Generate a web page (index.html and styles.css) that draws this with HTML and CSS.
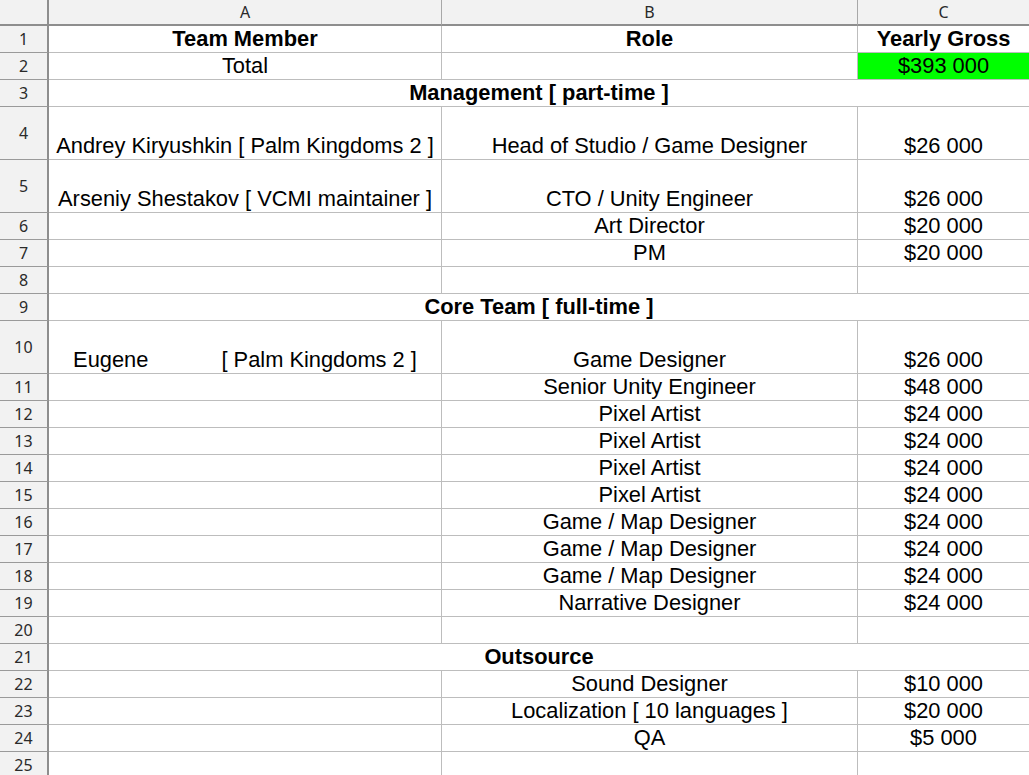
FILE: index.html
```html
<!DOCTYPE html>
<html lang="en">
<head>
<meta charset="utf-8">
<title>Team budget</title>
<link rel="stylesheet" href="styles.css">
</head>
<body>
<div class="sheet">
  <div class="row colhead">
    <div class="corner"></div>
    <div class="colname">A</div>
    <div class="colname">B</div>
    <div class="colname last">C</div>
  </div>

  <div class="row">
    <div class="rownum">1</div>
    <div class="cell bold">Team Member</div>
    <div class="cell bold">Role</div>
    <div class="cell last bold">Yearly Gross</div>
  </div>
  <div class="row">
    <div class="rownum">2</div>
    <div class="cell">Total</div>
    <div class="cell"></div>
    <div class="cell last total">$393 000</div>
  </div>
  <div class="row">
    <div class="rownum">3</div>
    <div class="cell merged bold">Management [ part-time ]</div>
  </div>
  <div class="row tall">
    <div class="rownum">4</div>
    <div class="cell">Andrey Kiryushkin [ Palm Kingdoms 2 ]</div>
    <div class="cell">Head of Studio / Game Designer</div>
    <div class="cell last">$26 000</div>
  </div>
  <div class="row tall">
    <div class="rownum">5</div>
    <div class="cell">Arseniy Shestakov [ VCMI maintainer ]</div>
    <div class="cell">CTO / Unity Engineer</div>
    <div class="cell last">$26 000</div>
  </div>
  <div class="row">
    <div class="rownum">6</div>
    <div class="cell"></div>
    <div class="cell">Art Director</div>
    <div class="cell last">$20 000</div>
  </div>
  <div class="row">
    <div class="rownum">7</div>
    <div class="cell"></div>
    <div class="cell">PM</div>
    <div class="cell last">$20 000</div>
  </div>
  <div class="row">
    <div class="rownum">8</div>
    <div class="cell"></div>
    <div class="cell"></div>
    <div class="cell last"></div>
  </div>
  <div class="row">
    <div class="rownum">9</div>
    <div class="cell merged bold">Core Team [ full-time ]</div>
  </div>
  <div class="row tall">
    <div class="rownum">10</div>
    <div class="cell split"><span>Eugene</span><span>[ Palm Kingdoms 2 ]</span></div>
    <div class="cell">Game Designer</div>
    <div class="cell last">$26 000</div>
  </div>
  <div class="row">
    <div class="rownum">11</div>
    <div class="cell"></div>
    <div class="cell">Senior Unity Engineer</div>
    <div class="cell last">$48 000</div>
  </div>
  <div class="row">
    <div class="rownum">12</div>
    <div class="cell"></div>
    <div class="cell">Pixel Artist</div>
    <div class="cell last">$24 000</div>
  </div>
  <div class="row">
    <div class="rownum">13</div>
    <div class="cell"></div>
    <div class="cell">Pixel Artist</div>
    <div class="cell last">$24 000</div>
  </div>
  <div class="row">
    <div class="rownum">14</div>
    <div class="cell"></div>
    <div class="cell">Pixel Artist</div>
    <div class="cell last">$24 000</div>
  </div>
  <div class="row">
    <div class="rownum">15</div>
    <div class="cell"></div>
    <div class="cell">Pixel Artist</div>
    <div class="cell last">$24 000</div>
  </div>
  <div class="row">
    <div class="rownum">16</div>
    <div class="cell"></div>
    <div class="cell">Game / Map Designer</div>
    <div class="cell last">$24 000</div>
  </div>
  <div class="row">
    <div class="rownum">17</div>
    <div class="cell"></div>
    <div class="cell">Game / Map Designer</div>
    <div class="cell last">$24 000</div>
  </div>
  <div class="row">
    <div class="rownum">18</div>
    <div class="cell"></div>
    <div class="cell">Game / Map Designer</div>
    <div class="cell last">$24 000</div>
  </div>
  <div class="row">
    <div class="rownum">19</div>
    <div class="cell"></div>
    <div class="cell">Narrative Designer</div>
    <div class="cell last">$24 000</div>
  </div>
  <div class="row">
    <div class="rownum">20</div>
    <div class="cell"></div>
    <div class="cell"></div>
    <div class="cell last"></div>
  </div>
  <div class="row">
    <div class="rownum">21</div>
    <div class="cell merged bold">Outsource</div>
  </div>
  <div class="row">
    <div class="rownum">22</div>
    <div class="cell"></div>
    <div class="cell">Sound Designer</div>
    <div class="cell last">$10 000</div>
  </div>
  <div class="row">
    <div class="rownum">23</div>
    <div class="cell"></div>
    <div class="cell">Localization [ 10 languages ]</div>
    <div class="cell last">$20 000</div>
  </div>
  <div class="row">
    <div class="rownum">24</div>
    <div class="cell"></div>
    <div class="cell">QA</div>
    <div class="cell last">$5 000</div>
  </div>
  <div class="row">
    <div class="rownum">25</div>
    <div class="cell"></div>
    <div class="cell"></div>
    <div class="cell last"></div>
  </div>
</div>
</body>
</html>
```

FILE: styles.css
```css
html, body {
  margin: 0;
  padding: 0;
  background: #ffffff;
}

body {
  width: 1029px;
  height: 775px;
  overflow: hidden;
}

.sheet {
  display: flex;
  flex-direction: column;
  width: 1029px;
}

.row {
  display: grid;
  grid-template-columns: 49px 393px 416px 171px;
  height: 27px;
}

.row.tall {
  height: 53px;
}

.row.colhead {
  height: 26px;
}

.corner,
.colname {
  background: #f2f2f2;
  border-bottom: 2px solid #8e8e8e;
  box-sizing: border-box;
}

.corner {
  border-right: 2px solid #8e8e8e;
}

.colname {
  border-right: 1px solid #a8a8a8;
  display: flex;
  align-items: center;
  justify-content: center;
  font-family: "Noto Sans", "Open Sans", sans-serif;
  font-size: 16px;
  color: #2a2a2a;
  line-height: 20px;
}

.colname.last {
  border-right: none;
}

.rownum {
  background: #f2f2f2;
  border-right: 2px solid #8e8e8e;
  border-bottom: 1px solid #9a9a9a;
  box-sizing: border-box;
  display: flex;
  align-items: center;
  justify-content: center;
  font-family: "Noto Sans", "Open Sans", sans-serif;
  font-size: 16px;
  color: #2a2a2a;
  line-height: 20px;
}

.cell {
  border-right: 1px solid #bdbdbd;
  border-bottom: 1px solid #bdbdbd;
  box-sizing: border-box;
  display: flex;
  align-items: flex-end;
  justify-content: center;
  padding-bottom: 1px;
  font-family: "Liberation Sans", Arial, sans-serif;
  font-size: 21.85px;
  line-height: 25px;
  color: #000000;
  white-space: nowrap;
  overflow: visible;
}

.cell.last {
  border-right: none;
}

.cell.merged {
  grid-column: 2 / 5;
  border-right: none;
}

.cell.bold {
  font-weight: bold;
}

.cell.total {
  background: #00ff00;
}

.cell.split {
  gap: 73px;
}
```
